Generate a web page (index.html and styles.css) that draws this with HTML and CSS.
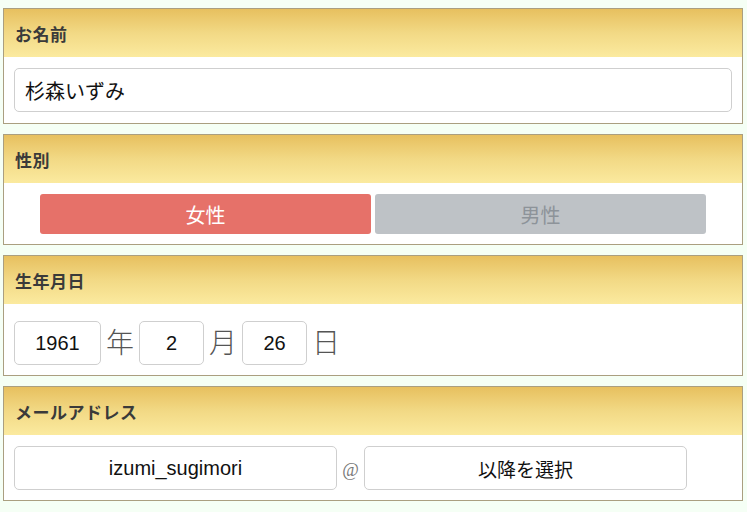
FILE: index.html
```html
<!DOCTYPE html>
<html lang="ja">
<head>
<meta charset="utf-8">
<title>フォーム</title>
<link rel="stylesheet" href="styles.css">
</head>
<body>
<div class="form">
  <section class="box">
    <div class="box-head">お名前</div>
    <div class="box-body">
      <input class="field field-name" type="text" value="杉森いずみ">
    </div>
  </section>

  <section class="box">
    <div class="box-head">性別</div>
    <div class="box-body gender">
      <button class="sex sex-on" type="button">女性</button>
      <button class="sex sex-off" type="button">男性</button>
    </div>
  </section>

  <section class="box">
    <div class="box-head">生年月日</div>
    <div class="box-body birth">
      <input class="field field-year" type="text" value="1961">
      <span class="unit">年</span>
      <input class="field field-md" type="text" value="2">
      <span class="unit">月</span>
      <input class="field field-md" type="text" value="26">
      <span class="unit">日</span>
    </div>
  </section>

  <section class="box">
    <div class="box-head">メールアドレス</div>
    <div class="box-body mail">
      <input class="field field-mail" type="text" value="izumi_sugimori">
      <span class="at">@</span>
      <button class="field field-mail domain" type="button">以降を選択</button>
    </div>
  </section>
</div>
</body>
</html>
```

FILE: styles.css
```css
html, body {
  margin: 0;
  padding: 0;
  background: #f5fff5;
}

body {
  font-family: "Liberation Sans", "Noto Sans CJK JP", sans-serif;
  color: #222;
}

.form {
  padding: 8px 4px 0 3px;
  display: flex;
  flex-direction: column;
  gap: 10px;
}

.box {
  border: 1px solid #aa9f80;
  background: #fff;
}

.box-head {
  height: 48px;
  display: flex;
  align-items: center;
  padding-left: 11px;
  background: linear-gradient(to bottom, #e7c05f 0%, #f2d985 50%, #fbea9f 100%);
  font-family: "Noto Sans CJK JP", sans-serif;
  font-weight: bold;
  font-size: 17px;
  color: #3a3a3a;
  letter-spacing: 0.5px;
}

.box-body {
  padding: 11px 10px 11px 10px;
}

.field {
  box-sizing: border-box;
  height: 44px;
  border: 1px solid #cfcfcf;
  border-radius: 5px;
  background: #fff;
  font-family: "Liberation Sans", "Noto Sans CJK JP", sans-serif;
  font-size: 20px;
  color: #111;
  outline: none;
  margin: 0;
}

.field-name {
  display: block;
  width: 100%;
  padding: 0 10px;
}

.gender {
  padding: 11px 10px 10px;
  display: flex;
  justify-content: center;
  gap: 4px;
}

.sex {
  width: 331px;
  height: 40px;
  border: none;
  border-radius: 3px;
  font-family: "Noto Sans CJK JP", sans-serif;
  font-size: 20px;
  padding: 0;
}

.sex-on {
  background: #e67169;
  color: #fff;
}

.sex-off {
  background: #bec2c6;
  color: #8d9399;
}

.birth {
  padding: 17px 10px 10px;
  display: flex;
  align-items: center;
}

.field-year {
  width: 87px;
  text-align: center;
}

.field-md {
  width: 65px;
  text-align: center;
}

.unit {
  width: 38px;
  text-align: center;
  font-family: "Noto Sans CJK JP", sans-serif;
  font-weight: 300;
  font-size: 28px;
  color: #555;
  line-height: 44px;
  position: relative;
  top: -2px;
}

.mail {
  padding: 11px 10px 10px;
  display: flex;
  align-items: center;
}

.field-mail {
  width: 323px;
  text-align: center;
  padding: 0;
}

.domain {
  font-family: "Noto Sans CJK JP", sans-serif;
  font-size: 19px;
  cursor: pointer;
}

.at {
  width: 27px;
  text-align: center;
  font-family: "Liberation Serif", serif;
  font-size: 18px;
  color: #777;
  padding-top: 4px;
}
```
